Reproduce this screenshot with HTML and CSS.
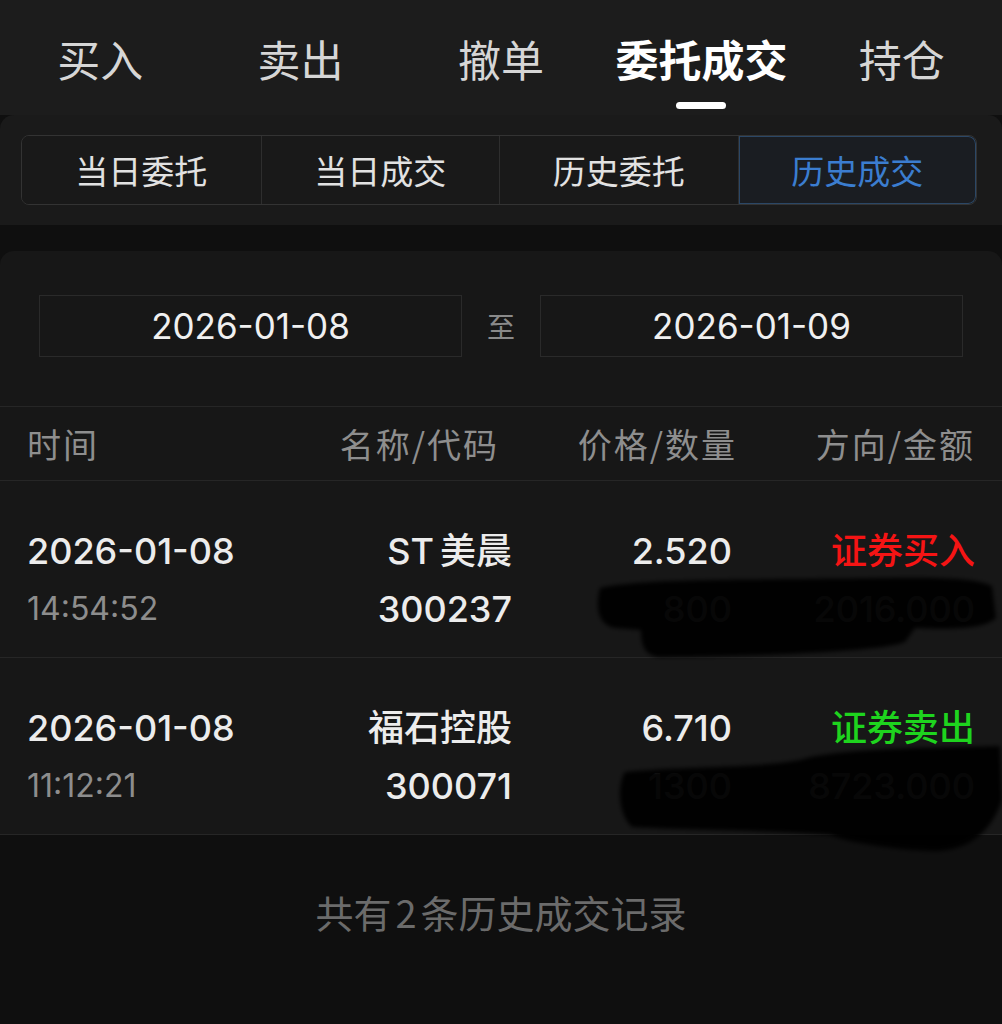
FILE: index.html
```html
<!DOCTYPE html>
<html>

<head>
    <meta charset="utf-8">
    <title>委托成交</title>
    <link rel="stylesheet" href="styles.css">
</head>

<body>
    <div class="nav">
        <div class="tab">买入</div>
        <div class="tab">卖出</div>
        <div class="tab">撤单</div>
        <div class="tab tab-active">
            委托成交
            <span class="tab-bar"></span>
        </div>
        <div class="tab">持仓</div>
    </div>

    <div class="filter">
        <div class="segs">
            <div class="seg">当日委托</div>
            <div class="seg">当日成交</div>
            <div class="seg">历史委托</div>
            <div class="seg seg-active">历史成交</div>
        </div>
    </div>

    <div class="card">
        <div class="dates">
            <div class="date-box">2026-01-08</div>
            <div class="date-to">至</div>
            <div class="date-box">2026-01-09</div>
        </div>

        <div class="thead">
            <div class="th-left">时间</div>
            <div>名称/代码</div>
            <div>价格/数量</div>
            <div>方向/金额</div>
        </div>

        <div class="trow">
            <div class="cell-left">
                <div class="val">2026-01-08</div>
                <div class="sub">14:54:52</div>
            </div>
            <div>
                <div class="val">ST<span class="gap">美晨</span></div>
                <div class="val">300237</div>
            </div>
            <div>
                <div class="val">2.520</div>
                <div class="val">800</div>
            </div>
            <div>
                <div class="val buy">证券买入</div>
                <div class="val">2016.000</div>
            </div>
        </div>

        <div class="trow">
            <div class="cell-left">
                <div class="val">2026-01-08</div>
                <div class="sub">11:12:21</div>
            </div>
            <div>
                <div class="val">福石控股</div>
                <div class="val">300071</div>
            </div>
            <div>
                <div class="val">6.710</div>
                <div class="val">1300</div>
            </div>
            <div>
                <div class="val sell">证券卖出</div>
                <div class="val">8723.000</div>
            </div>
        </div>
    </div>

    <div class="footer">共有<span class="num">2</span>条历史成交记录</div>

    <!-- hand-drawn redaction scribbles -->
    <svg class="scribble" width="1002" height="1024" viewBox="0 0 1002 1024">
        <defs>
            <filter id="soft">
                <feGaussianBlur stdDeviation="2" />
            </filter>
        </defs>
        <path filter="url(#soft)" d="M600 588 C640 578 760 580 880 578 C940 577 975 578 992 586 L996 618 C985 628 960 630 915 628 L905 642 C880 652 760 656 660 657 C645 656 641 646 641 630 L615 628 C598 625 595 608 600 588 Z" />
        <path filter="url(#soft)" d="M625 772 C680 766 760 768 800 760 C830 750 900 748 1000 746 L1002 800 C992 830 972 848 940 851 C900 851 850 843 830 835 C760 830 680 830 632 827 C618 815 617 785 625 772 Z" />
    </svg>
</body>

</html>
```

FILE: styles.css
```css
body {
    margin: 0;
    width: 1002px;
    min-height: 1024px;
    position: relative;
    background-color: #0f0f0f;
    font-family: "Inter", "Noto Sans CJK SC", sans-serif;
    color: #ececec;
}

.nav {
    display: grid;
    grid-template-columns: repeat(5, 1fr);
    align-items: start;
    padding: 36px 0 6px;
    background-color: #1c1c1c;
    font-family: "Noto Sans CJK SC", sans-serif;
}

.tab {
    font-size: 43px;
    line-height: 44px;
    color: #d6d6d6;
    text-align: center;
}

.tab-active {
    display: flex;
    flex-direction: column;
    align-items: center;
    color: #ffffff;
    font-weight: 700;
}

.tab-bar {
    width: 50px;
    height: 7px;
    margin-top: 22px;
    border-radius: 4px;
    background-color: #ffffff;
}

.filter {
    padding: 20px 25px 20px 21px;
    background-color: #1a1a1a;
    border-radius: 14px 14px 0 0;
}

.segs {
    display: grid;
    grid-template-columns: repeat(4, 1fr);
    height: 70px;
    box-sizing: border-box;
    border: 1px solid #333333;
    border-radius: 8px;
    overflow: hidden;
    font-family: "Noto Sans CJK SC", sans-serif;
}

.seg {
    font-size: 33px;
    line-height: 68px;
    text-align: center;
    color: #e2e2e2;
    background-color: #191919;
}

.seg + .seg {
    border-left: 1px solid #2e2e2e;
}

.seg-active {
    color: #3b7dd0;
    background-color: #1a1d22;
    box-shadow: inset 0 0 0 1px #2b4766;
    border-radius: 0 8px 8px 0;
}

.card {
    margin-top: 26px;
    background-color: #171717;
    border-radius: 14px 14px 0 0;
}

.dates {
    display: flex;
    align-items: center;
    padding: 44px 39px 49px;
}

.date-box {
    flex: 1;
    height: 62px;
    box-sizing: border-box;
    border: 1px solid #2a2a2a;
    display: flex;
    align-items: center;
    justify-content: center;
    font-size: 35px;
    color: #f0f0f0;
}

.date-to {
    width: 78px;
    text-align: center;
    font-size: 28px;
    color: #8a8a8a;
    font-family: "Noto Sans CJK SC", sans-serif;
}

.thead {
    display: grid;
    grid-template-columns: 1fr 238px 238px 238px;
    align-items: center;
    height: 75px;
    box-sizing: border-box;
    padding: 0 27px;
    border-top: 1px solid #262626;
    border-bottom: 1px solid #262626;
    font-family: "Noto Sans CJK SC", sans-serif;
    font-size: 34px;
    letter-spacing: 2px;
    color: #8e8e8e;
    text-align: right;
}

.th-left {
    text-align: left;
}

.trow {
    display: grid;
    grid-template-columns: 1fr 250px 220px 243px;
    padding: 41px 27px 19px;
    border-bottom: 1px solid #262626;
    text-align: right;
}

.cell-left {
    text-align: left;
}

.val {
    font-size: 36px;
    line-height: 58px;
    font-weight: 500;
    color: #ececec;
}

.gap {
    margin-left: 6px;
}

.sub {
    font-size: 32px;
    line-height: 58px;
    color: #8d8d8d;
}

.buy {
    color: #f51414;
}

.sell {
    color: #1ed41e;
}

.footer {
    padding-top: 58px;
    text-align: center;
    font-family: "Noto Sans CJK SC", sans-serif;
    font-size: 38px;
    line-height: 38px;
    color: #6b6b6b;
}

.num {
    margin: 0 4px;
}

.scribble {
    position: absolute;
    top: 0;
    left: 0;
    pointer-events: none;
    fill: rgba(0, 0, 0, 0.97);
}
```
